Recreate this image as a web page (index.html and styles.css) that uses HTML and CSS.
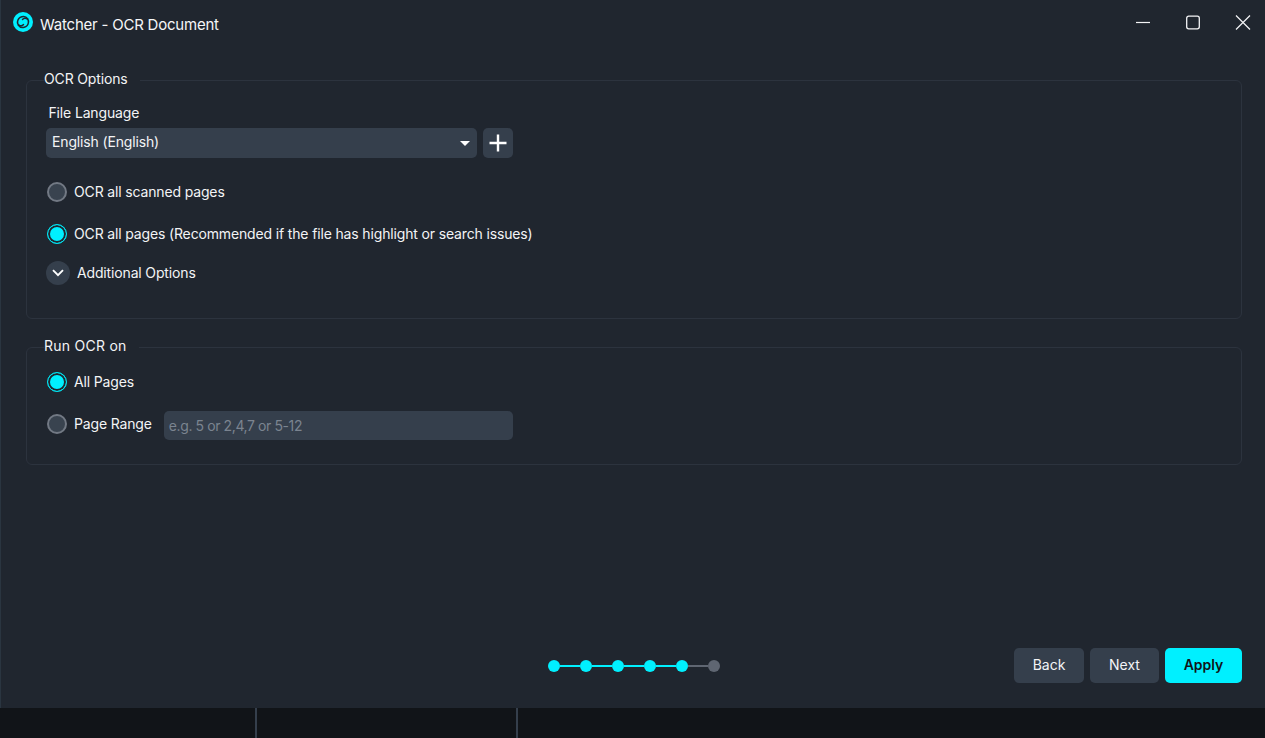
FILE: index.html
```html
<!DOCTYPE html>
<html lang="en">
<head>
<meta charset="utf-8">
<title>Watcher - OCR Document</title>
<link rel="stylesheet" href="styles.css">
</head>
<body>
<div class="window">
  <header class="titlebar">
    <div class="brand">
      <svg class="logo" viewBox="0 0 20 20" width="20" height="20" aria-hidden="true">
        <circle cx="10" cy="10" r="10" fill="#00f0ff"/>
        <path d="M14.8 7A5.6 5.6 0 0 0 4.6 9.5A3.4 3.4 0 0 0 10.5 12.5" fill="none" stroke="#1d2a33" stroke-width="1.5" stroke-linecap="round"/>
        <path d="M5.2 13A5.6 5.6 0 0 0 15.4 10.5A3.4 3.4 0 0 0 9.5 7.5" fill="none" stroke="#1d2a33" stroke-width="1.5" stroke-linecap="round"/>
      </svg>
      <span class="title">Watcher - OCR Document</span>
    </div>
    <div class="controls">
      <svg class="ctl" viewBox="0 0 16 16" width="16" height="16" aria-hidden="true"><path d="M1 7.5H15" stroke="#f3f4f6" stroke-width="1.2"/></svg>
      <svg class="ctl" viewBox="0 0 16 16" width="16" height="16" aria-hidden="true"><rect x="1.7" y="1.2" width="12.6" height="12.6" rx="2" fill="none" stroke="#f3f4f6" stroke-width="1.3"/></svg>
      <svg class="ctl" viewBox="0 0 16 16" width="16" height="16" aria-hidden="true"><path d="M1 .5L15 14.5M15 .5L1 14.5" stroke="#f3f4f6" stroke-width="1.2"/></svg>
    </div>
  </header>

  <main class="content">
    <fieldset class="group group-options">
      <legend>OCR Options</legend>
      <div class="field-label">File Language</div>
      <div class="lang-row">
        <div class="select"><span class="select-value">English (English)</span><i class="caret"></i></div>
        <button class="add" aria-label="Add language">
          <svg viewBox="0 0 18 18" width="18" height="18" aria-hidden="true"><path d="M9 .5V17.5M.5 9H17.5" stroke="#fff" stroke-width="2.4"/></svg>
        </button>
      </div>
      <label class="radio-row first"><i class="radio"></i>OCR all scanned pages</label>
      <label class="radio-row second"><i class="radio on"></i>OCR all pages (Recommended if the file has highlight or search issues)</label>
      <div class="more">
        <span class="chev">
          <svg viewBox="0 0 12 8" width="12" height="8" aria-hidden="true"><path d="M1 1.2L6 6.2L11 1.2" fill="none" stroke="#fff" stroke-width="1.9"/></svg>
        </span>
        Additional Options
      </div>
    </fieldset>

    <fieldset class="group group-run">
      <legend>Run OCR on</legend>
      <label class="radio-row all"><i class="radio on"></i>All Pages</label>
      <div class="range-row">
        <label class="radio-row range-label"><i class="radio"></i>Page Range</label>
        <div class="range-input">e.g. 5 or 2,4,7 or 5-12</div>
      </div>
    </fieldset>
  </main>

  <div class="actions">
    <div class="stepper">
      <i class="dot done"></i><i class="bar done"></i>
      <i class="dot done"></i><i class="bar done"></i>
      <i class="dot done"></i><i class="bar done"></i>
      <i class="dot done"></i><i class="bar done"></i>
      <i class="dot done"></i><i class="bar"></i>
      <i class="dot"></i>
    </div>
    <div class="buttons">
      <button class="btn back">Back</button>
      <button class="btn next">Next</button>
      <button class="btn apply">Apply</button>
    </div>
  </div>

  <footer class="strip">
    <div class="cell c1"></div>
    <div class="cell c2"></div>
  </footer>
</div>
</body>
</html>
```
FILE: styles.css
```css
* { box-sizing: border-box; }
html, body { margin: 0; height: 100%; }
body {
  background: #20262f;
  font-family: Inter, "Noto Sans", sans-serif;
  font-size: 14px;
  letter-spacing: -0.15px;
  color: #f3f4f6;
  overflow: hidden;
}
.window {
  height: 738px;
  display: flex;
  flex-direction: column;
  box-shadow: inset 1px 0 0 #2a3540;
}

.titlebar {
  height: 47px;
  flex: none;
  display: flex;
  align-items: center;
  justify-content: space-between;
  padding: 0 14px 0 13px;
}
.brand { display: flex; align-items: center; gap: 7px; }
.logo { display: block; margin-top: -4px; }
.title { font-size: 15px; line-height: 18px; letter-spacing: -0.22px; color: #f5f6f8; margin-top: 2px; }
.controls { display: flex; gap: 34px; margin-top: -2px; }
.ctl { display: block; }

.content { flex: 1; padding: 0 23px 0 26px; display: flex; flex-direction: column; }
.group {
  margin: 0;
  min-width: 0;
  border: 1px solid #2c333e;
  border-radius: 6px;
  padding: 0 0 0 19px;
}
.group legend {
  margin-left: -2px;
  padding: 0 12px 4px 0;
  font-size: 14px;
  line-height: 17px;
  color: #f3f4f6;
}
.group-run legend { letter-spacing: 0.25px; }
.group-options { height: 249px; margin-top: 23px; }
.group-run { height: 128px; margin-top: 18px; }

.field-label { margin: 13px 0 0 2.5px; line-height: 17px; }
.lang-row { display: flex; gap: 6px; margin-top: 7px; }
.select {
  width: 431px;
  height: 30px;
  background: #353f4c;
  border-radius: 5px;
  display: flex;
  align-items: center;
  justify-content: space-between;
  padding: 0 7px 0 6px;
}
.select-value { margin-top: -3px; }
.caret {
  width: 0; height: 0;
  border-left: 5px solid transparent;
  border-right: 5px solid transparent;
  border-top: 5px solid #fff;
}
.add {
  width: 30px;
  height: 30px;
  padding: 0;
  border: 0;
  border-radius: 5px;
  background: #353f4c;
  display: flex;
  align-items: center;
  justify-content: center;
}

.radio-row { display: flex; align-items: center; gap: 7px; line-height: 20px; color: #f3f4f6; }
.radio-row.first { margin-top: 24px; }
.radio-row.second { margin-top: 22px; }
.radio {
  width: 20px;
  height: 20px;
  flex: none;
  border: 2px solid #727984;
  border-radius: 50%;
  background: #39434f;
  margin-left: 1px;
}
.radio.on {
  border: 1.5px solid #00e5f2;
  background: #00f0ff;
  box-shadow: inset 0 0 0 2px #20262f;
}
.more { display: flex; align-items: center; gap: 7px; margin-top: 17px; line-height: 24px; }
.chev {
  width: 24px;
  height: 24px;
  border-radius: 50%;
  background: #353f4c;
  display: flex;
  align-items: center;
  justify-content: center;
}
.radio-row.all { margin-top: 14px; }
.range-row { display: flex; align-items: flex-start; gap: 12px; margin-top: 19px; }
.range-label { margin-top: 3px; }
.range-input {
  width: 349px;
  height: 29px;
  background: #353f4c;
  border-radius: 5px;
  padding: 0 5px;
  display: flex;
  align-items: center;
  color: #7b8490;
  letter-spacing: -0.4px;
}

.actions {
  flex: none;
  height: 60px;
  position: relative;
  display: flex;
  align-items: flex-start;
  justify-content: flex-end;
  padding-right: 23px;
}
.stepper {
  position: absolute;
  left: 548px;
  top: 12px;
  display: flex;
  align-items: center;
}
.dot { width: 12px; height: 12px; border-radius: 50%; background: #5f6672; flex: none; }
.dot.done { background: #00f0ff; }
.bar { width: 20px; height: 2px; background: #5f6672; flex: none; }
.bar.done { background: #00f0ff; }
.buttons { display: flex; gap: 6px; }
.btn {
  height: 35px;
  border: 0;
  border-radius: 5px;
  padding: 0 0 2px;
  font: 14px/17px Inter, "Noto Sans", sans-serif;
  background: #353f4c;
  color: #f3f4f6;
}
.back { width: 70px; }
.next { width: 69px; }
.apply { width: 77px; background: #00f0ff; color: #111418; font-weight: 600; }

.strip { flex: none; height: 30px; background: #111418; display: flex; }
.cell { border-right: 2px solid #353f4c; }
.c1 { width: 257px; }
.c2 { width: 261px; }
```
